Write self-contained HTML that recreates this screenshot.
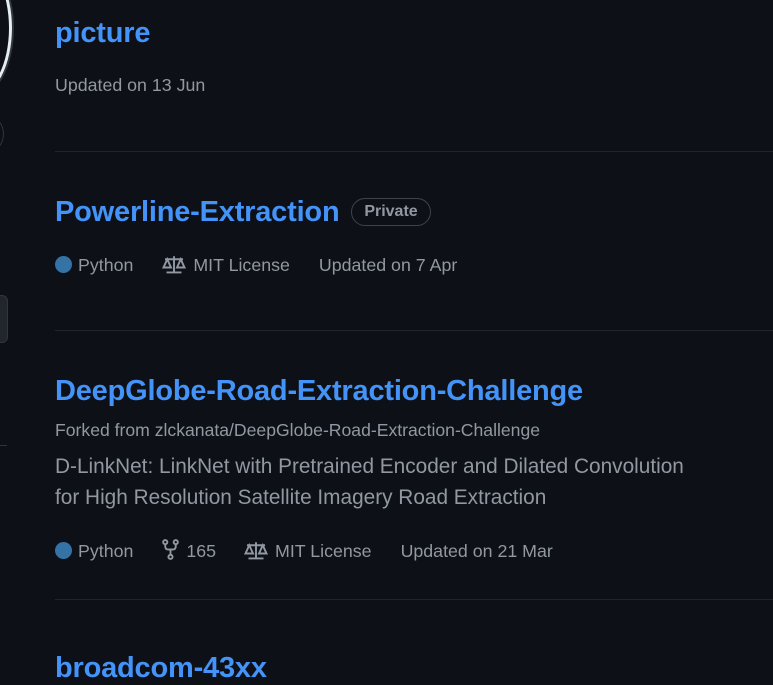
<!DOCTYPE html>
<html><head><meta charset="utf-8"><style>
body{margin:0;width:773px;height:661px;background:#0d1117;overflow:hidden;position:relative;font-family:"Liberation Sans",sans-serif;}
.a{position:absolute;white-space:nowrap;}
.t{color:#4493f8;font-weight:bold;font-size:29px;letter-spacing:-0.2px;}
.m{color:#9198a1;font-size:17.8px;}
.hr{position:absolute;left:55px;right:0;height:1px;background:#21262d;}
.dot{display:inline-block;width:17px;height:17px;border-radius:50%;background:#3572a5;vertical-align:-2px;margin-right:6px;}
svg{vertical-align:-3px;margin-right:7px;}
</style></head><body>
<div class="a" style="left:-60px;top:-40px;width:66px;height:130px;border-radius:50%;border:3px solid #e6edf3;box-shadow:0 0 0 2px #30363d;"></div>
<div class="a" style="left:-30px;top:115px;width:32px;height:36px;border-radius:50%;border:1px solid #30363d;"></div>
<div class="a" style="left:-10px;top:295px;width:16px;height:46px;border-radius:6px;background:#21262d;border:1px solid #30363d;"></div>
<div class="a" style="left:0;top:445px;width:7px;height:1px;background:#30363d;"></div>

<div class="a t" style="left:55px;top:17px;">picture</div>
<div class="a m" style="left:55px;top:75px;">Updated on 13 Jun</div>
<div class="hr" style="top:151px"></div>

<div class="a t" style="left:55px;top:196px;">Powerline-Extraction</div>
<div class="a" style="left:351px;top:198px;height:28px;width:80px;border:1px solid #3d444d;border-radius:14px;box-sizing:border-box;color:#9198a1;font-weight:bold;font-size:16px;line-height:26px;text-align:center;">Private</div>
<div class="a m" style="left:55px;top:255px;"><span class="dot"></span>Python<span style="margin-left:29px"></span><svg width="24" height="19" viewBox="0 0 16 12" fill="none" stroke="#9198a1" stroke-width="1.3"><path d="M8 0.5V11M3 11.3h10M2 2.5h12M3.5 2.5L1 8h5zM12.5 2.5L10 8h5z"/></svg>MIT License<span style="margin-left:29px"></span>Updated on 7 Apr</div>
<div class="hr" style="top:330px"></div>

<div class="a t" style="left:55px;top:375px;">DeepGlobe-Road-Extraction-Challenge</div>
<div class="a" style="left:55px;top:420px;color:#9198a1;font-size:17.6px;">Forked from zlckanata/DeepGlobe-Road-Extraction-Challenge</div>
<div class="a" style="left:55px;top:451px;color:#9198a1;font-size:20.8px;line-height:31px;">D-LinkNet: LinkNet with Pretrained Encoder and Dilated Convolution<br>for High Resolution Satellite Imagery Road Extraction</div>
<div class="a m" style="left:55px;top:539px;"><span class="dot"></span>Python<span style="margin-left:29px"></span><svg width="17" height="21" viewBox="0 0 16 20" fill="none" stroke="#9198a1" stroke-width="1.8"><circle cx="3" cy="3" r="2"/><circle cx="13" cy="3" r="2"/><circle cx="8" cy="17" r="2"/><path d="M3 5v2q0 3 3 3h4q3 0 3-3V5M8 10v5"/></svg>165<span style="margin-left:28px"></span><svg width="24" height="19" viewBox="0 0 16 12" fill="none" stroke="#9198a1" stroke-width="1.3"><path d="M8 0.5V11M3 11.3h10M2 2.5h12M3.5 2.5L1 8h5zM12.5 2.5L10 8h5z"/></svg>MIT License<span style="margin-left:29px"></span>Updated on 21 Mar</div>
<div class="hr" style="top:599px"></div>

<div class="a t" style="left:55px;top:652px;">broadcom-43xx</div>
</body></html>
